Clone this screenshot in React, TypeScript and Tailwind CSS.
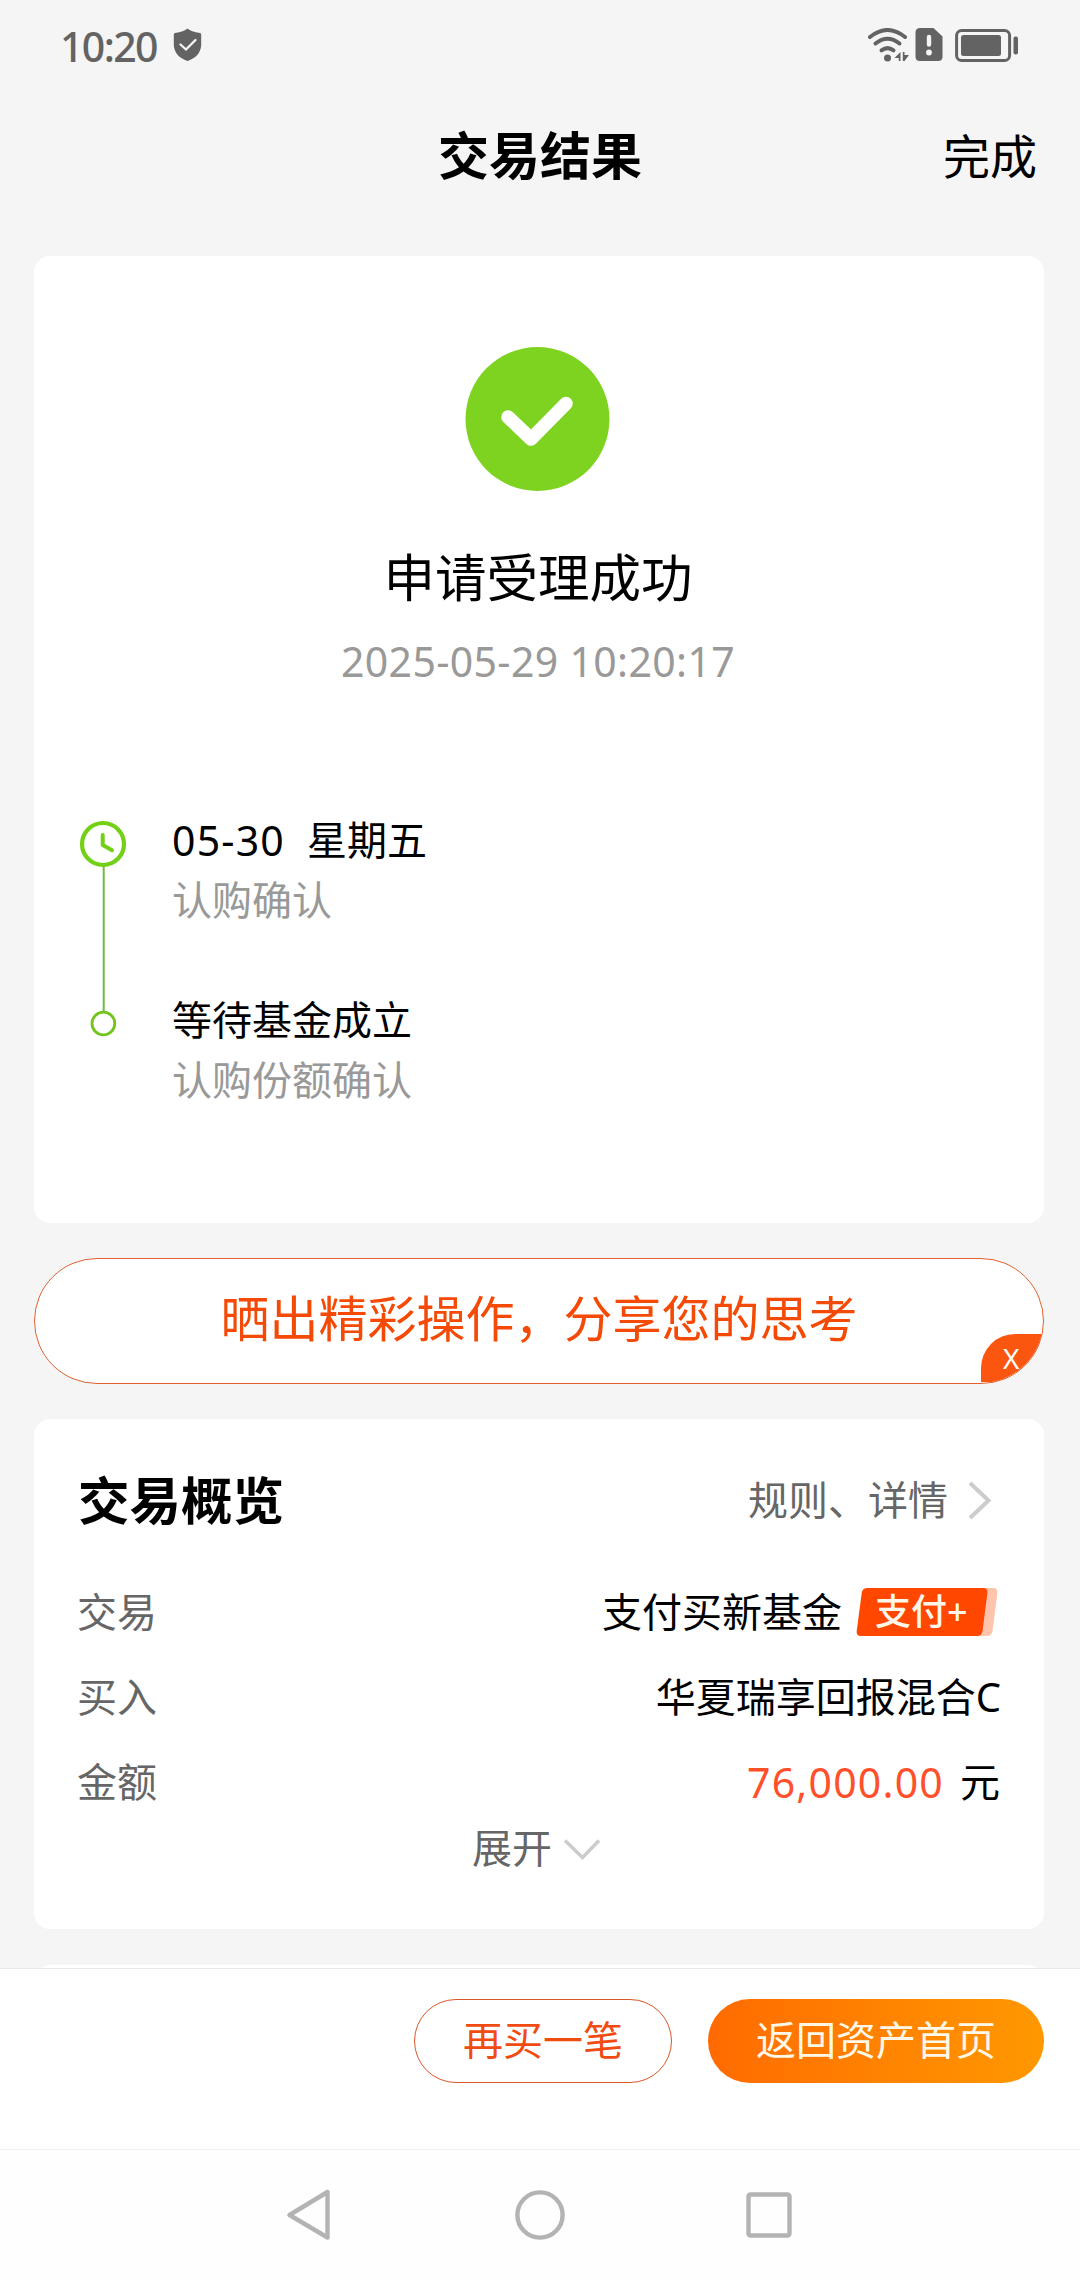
import type { ReactNode } from 'react'

const steps = [
    { title: '05-30', extra: '星期五', note: '认购确认' },
    { title: '等待基金成立', extra: '', note: '认购份额确认' },
]

function StatusBar() {
    return (
        <div className="h-[96px] pl-[60px] pr-[60px] flex items-start justify-between text-[#636363]">
            <div className="flex items-start">
                <span className="mt-[21px] w-[113px] text-[41px] leading-[50px] font-medium tracking-[-1.6px]">10:20</span>
                <svg className="mt-[28px]" width="29" height="34" viewBox="0 0 29 34">
                    <path d="M14.5 0.5 Q18 3.6 27 5 Q28.2 5.3 28.2 6.5 V17 Q27.5 28.5 14.5 33 Q1.5 28.5 0.8 17 V6.5 Q0.8 5.3 2 5 Q11 3.6 14.5 .5Z" fill="currentColor" />
                    <path d="M7.5 16.5 L13 21.5 L22.5 12" fill="none" stroke="#f5f5f5" strokeWidth="2.3" strokeLinecap="round" />
                </svg>
            </div>
            <div className="mt-[28px] flex items-start">
                <svg width="43" height="35" viewBox="0 0 43 35" fill="none" stroke="currentColor" strokeWidth="4" strokeLinecap="round">
                    <path d="M3 9 Q20.5 -5 38 9" />
                    <path d="M8.5 15.5 Q20.5 6 32.5 15.5" />
                    <path d="M14.5 22.3 Q20.5 18 26.5 22.3" />
                    <circle cx="20.5" cy="30" r="3.5" fill="currentColor" stroke="none" />
                    <path d="M33.5 24 V33 H31.8 V30 H27.5Z M35.8 24 H37.5 V27 H42 L37.5 33 H35.8Z" fill="currentColor" stroke="none" />
                </svg>
                <svg className="ml-[5px]" width="28" height="34" viewBox="0 0 28 34">
                    <path d="M5 0 H18.5 L27.5 8.5 V28.5 Q27.5 33 23 33 H5 Q.5 33 .5 28.5 V4.5 Q.5 0 5 0Z" fill="currentColor" />
                    <path d="M14 9 V16.5" stroke="#f5f5f5" strokeWidth="4.4" strokeLinecap="round" />
                    <circle cx="14" cy="24.5" r="2.9" fill="#f5f5f5" />
                </svg>
                <svg className="ml-[12px]" width="65" height="35" viewBox="0 0 65 35">
                    <rect x="1.6" y="2.5" width="53" height="30" rx="5" fill="none" stroke="currentColor" strokeWidth="3" />
                    <rect x="6" y="7" width="40" height="21" rx="2.5" fill="currentColor" />
                    <rect x="58.5" y="8.5" width="4.5" height="18" rx="2" fill="currentColor" />
                </svg>
            </div>
        </div>
    )
}

function Timeline() {
    return (
        <div className="mt-[121px] ml-[45px] flex">
            <svg className="mt-[10px]" width="48" height="220" viewBox="0 0 48 220" fill="none">
                <path d="M24.7 46 V191" stroke="#74b843" strokeWidth="2" />
                <circle cx="24" cy="24" r="21" stroke="#72d016" strokeWidth="4.2" />
                <path d="M23.7 15 V25 L33 30.3" stroke="#72d016" strokeWidth="4" strokeLinecap="round" strokeLinejoin="round" />
                <circle cx="24.4" cy="203.5" r="11.4" stroke="#72c51c" strokeWidth="2.8" />
            </svg>
            <div className="ml-[45px] flex flex-col gap-[60px] text-[40px]">
                {steps.map((step) => (
                    <div key={step.title} className="h-[120px]">
                        <div className="flex gap-[22px] leading-[60px] text-black">
                            {step.extra ? (
                                <>
                                    <span className="text-[41px] tracking-[1.2px]">{step.title}</span>
                                    <span>{step.extra}</span>
                                </>
                            ) : (
                                <span>{step.title}</span>
                            )}
                        </div>
                        <div className="leading-[60px] text-[#999]">{step.note}</div>
                    </div>
                ))}
            </div>
        </div>
    )
}

function Row({ label, children }: { label: string; children: ReactNode }) {
    return (
        <div className="h-[85px] flex items-center justify-between text-[40px] leading-[60px]">
            <span className="-ml-[1px] text-[#666]">{label}</span>
            <div className="flex items-center text-black">{children}</div>
        </div>
    )
}

function PayTag() {
    return (
        <span className="relative ml-[14px] mr-[2px] w-[142px] h-[48px] flex items-center">
            <svg className="absolute inset-0" width="142" height="48" viewBox="0 0 142 48">
                <path d="M20 0 H137 Q142 0 141.4 5 L136.5 43 Q135.8 48 131 48 H20Z" fill="#ffc4ae" />
                <path d="M11.5 0 H127 Q132 0 131.4 5 L126.5 43 Q125.8 48 121 48 H5 Q0 48 .7 43 L5.7 5 Q6.4 0 11.5 0Z" fill="#ff4700" />
            </svg>
            <span className="relative ml-[19px] text-[36px] leading-[48px] font-medium text-[#fff6ea]">支付+</span>
        </span>
    )
}

export default function App() {
    return (
        <div className="w-[1080px] h-[2280px] overflow-hidden bg-[#f5f5f5] flex flex-col font-['Noto_Sans','Noto_Sans_CJK_SC',sans-serif]">
            <StatusBar />

            <header className="h-[160px] px-[43px] grid grid-cols-3 items-start text-black">
                <span />
                <h1 className="mt-[23px] text-center text-[51px] leading-[72px] font-bold">交易结果</h1>
                <span className="mt-[24px] text-right text-[47px] leading-[72px]">完成</span>
            </header>

            <main className="h-[1712px] px-[34px] pr-[36px] overflow-hidden flex flex-col shrink-0">
                <section className="h-[967px] shrink-0 rounded-[16px] bg-white">
                    <div className="pt-[90px] pr-[2px] flex flex-col items-center">
                        <svg width="146" height="146" viewBox="0 0 146 146">
                            <circle cx="72.5" cy="73" r="72" fill="#7ed321" />
                            <path d="M43 71 L66 93 L101 57.5" fill="none" stroke="#fff" strokeWidth="13.5" strokeLinecap="round" strokeLinejoin="round" />
                        </svg>
                        <div className="mt-[47px] text-[51.5px] leading-[76px] text-black">申请受理成功</div>
                        <div className="mt-[18px] text-[41px] leading-[56px] tracking-[0.35px] text-[#999]">2025-05-29 10:20:17</div>
                    </div>
                    <Timeline />
                </section>

                <div className="relative mt-[35px] h-[126px] shrink-0 rounded-full border border-[#e2612f] bg-white overflow-hidden">
                    <div className="mt-[23px] text-center text-[49px] leading-[72px] text-[#f54a06]">晒出精彩操作，分享您的思考</div>
                    <button className="absolute right-0 bottom-[1px] w-[62px] h-[48px] rounded-tl-[34px] bg-[#fb560f] pl-[22px] text-left text-[28px] leading-[47px] text-white">X</button>
                </div>

                <section className="mt-[35px] h-[510px] shrink-0 rounded-[16px] bg-white px-[44px]">
                    <div className="pt-[43px] flex items-center justify-between">
                        <h2 className="text-[51.5px] leading-[76px] font-bold text-black">交易概览</h2>
                        <div className="flex items-center text-[40px] leading-[60px] text-[#666]">
                            规则、详情
                            <svg className="ml-[19px] mr-[7px]" width="26" height="40" viewBox="0 0 26 40">
                                <path d="M3 3 L21.5 20.5 L3 38" fill="none" stroke="#ccc" strokeWidth="4" />
                            </svg>
                        </div>
                    </div>
                    <div className="mt-[31px]">
                        <Row label="交易">
                            支付买新基金
                            <PayTag />
                        </Row>
                        <Row label="买入">
                            <span className="-mr-[1px]">华夏瑞享回报混合C</span>
                        </Row>
                        <Row label="金额">
                            <span className="mr-[16px] text-[41px] tracking-[1.2px] text-[#ff4f2b]">76,000.00</span>
                            <span>元</span>
                        </Row>
                    </div>
                    <div className="-mt-[6px] pl-[394px] flex items-center text-[40px] leading-[60px] text-[#666]">
                        展开
                        <svg className="ml-[11px] mt-[4px]" width="38" height="24" viewBox="0 0 38 24">
                            <path d="M2 2.5 L19.5 19.5 L36 2.5" fill="none" stroke="#ccc" strokeWidth="3.5" />
                        </svg>
                    </div>
                </section>

                {/* top edge of the next card, cut by the footer */}
                <section className="mt-[36px] h-[60px] shrink-0 rounded-[16px] bg-white" />
            </main>

            <footer className="h-[181px] shrink-0 border-t border-[#e8e8e8] bg-white pt-[30px] pr-[36px] flex items-start justify-end gap-[36px]">
                <button className="w-[258px] h-[84px] rounded-full border-[1.5px] border-[#d9572a] pb-[3px] text-[40px] leading-[78px] text-[#f04c12]">再买一笔</button>
                <button className="w-[336px] h-[84px] rounded-full bg-linear-to-r from-[#ff6a00] to-[#ff9800] pb-[3px] text-[40px] leading-[81px] text-[#fff8e8]">返回资产首页</button>
            </footer>

            <nav className="h-[131px] shrink-0 border-t border-[#f0f0f0] bg-[#fefefe] flex items-start justify-center pt-[37px]">
                <svg width="520" height="56" viewBox="0 0 520 56" fill="none" stroke="#b3b3b3" strokeWidth="4.4" strokeLinejoin="round">
                    <path d="M47.5 5 V50.5 L9.5 28Z" />
                    <circle cx="260" cy="28" r="22.6" />
                    <rect x="468.5" y="7" width="41" height="41" rx="2" transform="translate(0 .5)" />
                </svg>
            </nav>
        </div>
    )
}
